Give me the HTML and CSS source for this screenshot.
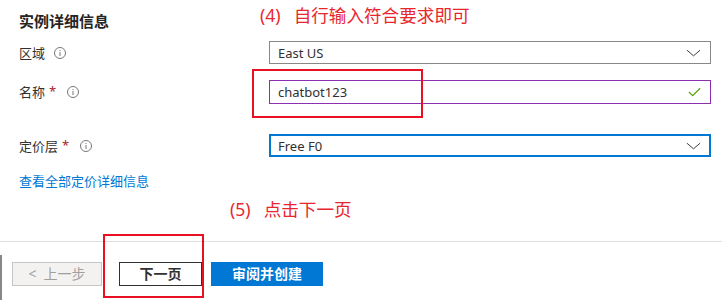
FILE: index.html
```html
<!DOCTYPE html>
<html lang="zh-CN">
<head>
    <meta charset="UTF-8">
    <meta name="viewport" content="width=device-width, initial-scale=1.0">
    <title>实例详细信息</title>
    <link rel="stylesheet" href="styles.css">
</head>
<body>
<div class="page">
    <div class="section">
        <h2>实例详细信息</h2>

        <div class="field first">
            <div class="label">区域
                <svg class="info" viewBox="0 0 12 12"><circle cx="6" cy="6" r="5.5"/><line x1="6" y1="5" x2="6" y2="9"/><line x1="6" y1="3" x2="6" y2="4"/></svg>
            </div>
            <div class="control select">
                <span>East US</span>
                <svg class="chevron" viewBox="0 0 16 8"><polyline points="1,1 8,7 15,1"/></svg>
            </div>
        </div>

        <div class="field second">
            <div class="label">名称<span class="req">*</span>
                <svg class="info" viewBox="0 0 12 12"><circle cx="6" cy="6" r="5.5"/><line x1="6" y1="5" x2="6" y2="9"/><line x1="6" y1="3" x2="6" y2="4"/></svg>
            </div>
            <div class="control input">
                <span>chatbot123</span>
                <svg class="check" viewBox="0 0 14 10"><polyline points="1,5 5,9 13,1"/></svg>
            </div>
        </div>

        <div class="field third">
            <div class="label">定价层<span class="req">*</span>
                <svg class="info" viewBox="0 0 12 12"><circle cx="6" cy="6" r="5.5"/><line x1="6" y1="5" x2="6" y2="9"/><line x1="6" y1="3" x2="6" y2="4"/></svg>
            </div>
            <div class="control select focus">
                <span>Free F0</span>
                <svg class="chevron" viewBox="0 0 16 8"><polyline points="1,1 8,7 15,1"/></svg>
            </div>
        </div>

        <a href="#" class="link">查看全部定价详细信息</a>
    </div>

    <div class="footer">
        <div class="actions">
            <button class="btn prev" disabled><span class="arrow">&lt;</span>上一步</button>
            <button class="btn next">下一页</button>
            <button class="btn primary">审阅并创建</button>
        </div>
    </div>

    <div class="note note-4"><span class="num">(4)</span>自行输入符合要求即可</div>
    <div class="note note-5"><span class="num">(5)</span>点击下一页</div>
    <div class="mark mark-name"></div>
    <div class="mark mark-next"></div>
</div>
</body>
</html>
```

FILE: styles.css
```css
* {
    margin: 0;
    padding: 0;
    box-sizing: border-box;
}
body {
    background: #fff;
    color: #323130;
    font-family: "Noto Sans", "Noto Sans CJK SC", sans-serif;
    font-size: 13px;
}
.page {
    position: relative;
    width: 722px;
    height: 300px;
    overflow: hidden;
}
.section {
    padding: 13px 11px 0 19px;
    height: 241px;
}
h2 {
    font-size: 15px;
    font-weight: bold;
    line-height: 16px;
    color: #252423;
}
.field {
    display: grid;
    grid-template-columns: 250px 1fr;
    align-items: center;
}
.field.first {
    margin-top: 12px;
}
.field.second {
    margin-top: 16px;
}
.field.third {
    margin-top: 30px;
}
.label {
    display: flex;
    align-items: center;
    line-height: 16px;
}
.req {
    color: #a4262c;
    margin-left: 4px;
    font-size: 13px;
    line-height: 10px;
    position: relative;
    top: -1px;
}
.info {
    width: 12px;
    height: 12px;
    margin-left: 9px;
    fill: none;
    stroke: #797775;
    stroke-width: 1;
}
.req + .info {
    margin-left: 11px;
}
.control {
    display: flex;
    align-items: center;
    justify-content: space-between;
    height: 23px;
    padding: 0 9px 0 8px;
    border: 1px solid #8a8886;
    font-size: 13px;
    line-height: 16px;
}
.control.input {
    height: 24px;
    border-color: #8c2fb0;
}
.control.focus {
    border: 2px solid #0078d4;
    padding-left: 7px;
    padding-right: 8px;
}
.chevron {
    width: 15px;
    height: 8px;
    fill: none;
    stroke: #323130;
    stroke-width: 1;
}
.check {
    width: 13px;
    height: 10px;
    fill: none;
    stroke: #57a300;
    stroke-width: 1.3;
}
.link {
    display: block;
    margin-top: 16px;
    color: #0078d4;
    text-decoration: none;
    line-height: 16px;
    width: max-content;
}
.footer {
    border-top: 1px solid #e1dfdd;
    height: 59px;
    padding-top: 13px;
}
.actions {
    height: 45px;
    border-left: 2px solid #8a8886;
    padding: 7px 0 0 10px;
    display: flex;
}
.btn {
    height: 24px;
    font-family: "Noto Sans", "Noto Sans CJK SC", sans-serif;
    font-size: 14px;
    line-height: 18px;
    font-weight: bold;
    border: 1px solid #323130;
    background: #fff;
    color: #323130;
    cursor: pointer;
}
.btn.prev {
    width: 90px;
    font-weight: normal;
    background: #f3f2f1;
    border-color: #c8c6c4;
    color: #a19f9d;
    cursor: default;
}
.btn.prev .arrow {
    margin-right: 7px;
}
.btn.next {
    width: 83px;
    margin-left: 17px;
}
.btn.primary {
    width: 112px;
    margin-left: 9px;
    background: #0078d4;
    border-color: #0078d4;
    color: #fff;
}
.note {
    position: absolute;
    color: #e8262e;
    font-size: 17.6px;
    line-height: 24px;
    white-space: nowrap;
}
.note .num {
    margin-right: 13px;
}
.note-4 {
    left: 260px;
    top: 3px;
}
.note-5 {
    left: 230px;
    top: 197px;
}
.mark {
    position: absolute;
    border: 2px solid #e81123;
}
.mark-name {
    left: 252px;
    top: 69px;
    width: 171px;
    height: 49px;
}
.mark-next {
    left: 103px;
    top: 234px;
    width: 101px;
    height: 64px;
}
```
